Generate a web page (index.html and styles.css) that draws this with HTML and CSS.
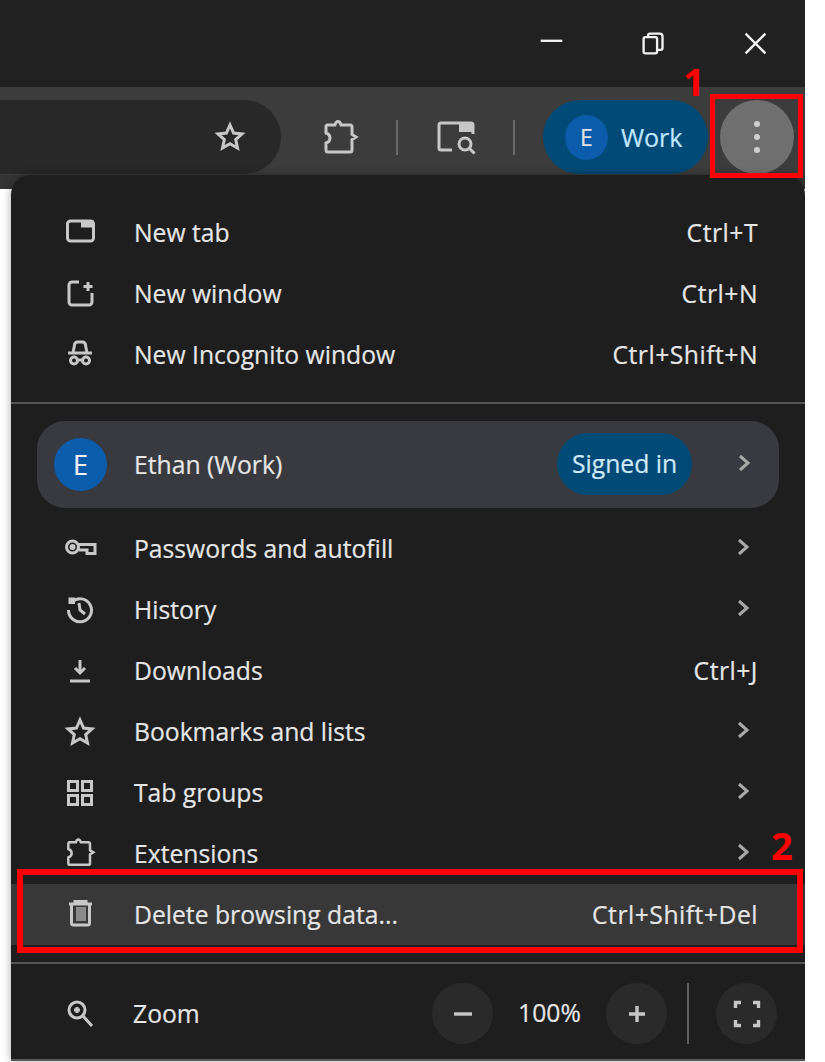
FILE: index.html
```html
<!DOCTYPE html>
<html lang="en">
<head>
<meta charset="utf-8">
<title>Chrome menu</title>
<link rel="stylesheet" href="styles.css">
</head>
<body>
<div class="shell">
  <header class="titlebar">
    <svg class="win" viewBox="0 0 30 30"><path d="M3 12h24"/></svg>
    <svg class="win" viewBox="0 0 30 30"><rect x="4" y="8" width="15" height="18" rx="2"/><path d="M9 7V6a2 2 0 0 1 2-2h11a3 3 0 0 1 3 3v13a2 2 0 0 1-2 2h-3"/></svg>
    <svg class="win" viewBox="0 0 30 30"><path d="M4 4l22 22M26 4L4 26"/></svg>
  </header>
  <div class="toolbar">
    <div class="omnibox">
      <svg class="ico" viewBox="0 0 30 30"><path d="M15 3l3.600 8 8.400.9-6.300 5.700 1.800 8.400-7.500-4.300L7.500 26l1.800-8.400L3 11.900l8.400-.9z"/></svg>
    </div>
    <svg class="tool-ext" viewBox="0 0 36 36"><path d="M5 6h8c.5-2 1.500-3.500 3-3.500s2.500 1.500 3 3.500h9a2 2 0 0 1 2 2v7.500l4 2.500-4 2.500V31a2 2 0 0 1-2 2H6a2 2 0 0 1-2-2v-7c3-1 4-3 4-5s-1-4-4-5V7z"/></svg>
    <span class="tool-sep"></span>
    <svg class="tool-panel" viewBox="0 0 38 34"><path d="M15 30H4a2 2 0 0 1-2-2V5a2 2 0 0 1 2-2h30a2 2 0 0 1 2 2v9"/><rect class="solid" x="22" y="3" width="15" height="9"/><circle cx="28" cy="24" r="6"/><path d="M32.500 28.500l5 5"/></svg>
    <span class="tool-sep"></span>
    <div class="work-pill"><span class="work-avatar">E</span><span>Work</span></div>
    <div class="kebab"><i></i><i></i><i></i></div>
  </div>
  <main class="stage">
    <nav class="menu">
      <section class="group first">
        <div class="row">
          <svg class="ico" viewBox="0 0 30 30"><rect x="2.500" y="3" width="26" height="20" rx="3"/><rect class="solid" x="16" y="2.500" width="13" height="7"/></svg>
          <span class="label">New tab</span><span class="key">Ctrl+T</span>
        </div>
        <div class="row">
          <svg class="ico" viewBox="0 0 30 30"><path d="M14 3H7a3 3 0 0 0-3 3v17a3 3 0 0 0 3 3h17a3 3 0 0 0 3-3V14"/><path d="M23 3v9M18.500 7.500h9"/></svg>
          <span class="label">New window</span><span class="key">Ctrl+N</span>
        </div>
        <div class="row">
          <svg class="ico" viewBox="0 0 30 30"><path d="M3 13h24M8 13l1.500-8a3 3 0 0 1 3-3h5a3 3 0 0 1 3 3l1.500 8"/><circle cx="9" cy="20.500" r="3.500"/><circle cx="21" cy="20.500" r="3.500"/><path d="M12.500 20h5"/></svg>
          <span class="label">New Incognito window</span><span class="key">Ctrl+Shift+N</span>
        </div>
      </section>
      <hr class="sep sep-a">
      <div class="profile">
        <span class="avatar">E</span>
        <span class="label">Ethan (Work)</span>
        <span class="signed">Signed in</span>
        <svg class="chev" viewBox="0 0 30 30"><path d="M11 8l8 7-8 7"/></svg>
      </div>
      <section class="group">
        <div class="row">
          <svg class="ico" viewBox="0 0 30 30"><circle cx="7.500" cy="13" r="6"/><circle cx="7.500" cy="13" r="1.500"/><path d="M14 10.500h16v9h-8v-3.500h-8"/></svg>
          <span class="label">Passwords and autofill</span>
          <svg class="chev" viewBox="0 0 30 30"><path d="M11 8l8 7-8 7"/></svg>
        </div>
        <div class="row">
          <svg class="ico" viewBox="0 0 30 30"><path d="M7 7a11.500 11.500 0 1 1-3.500 8"/><path class="fillpath" d="M3.500 2.500h6.500v6.500H3.500z"/><path d="M14 8l1 7 5 4"/></svg>
          <span class="label">History</span>
          <svg class="chev" viewBox="0 0 30 30"><path d="M11 8l8 7-8 7"/></svg>
        </div>
        <div class="row">
          <svg class="ico" viewBox="0 0 30 30"><path d="M15 4v13M10 12l5 5 5-5M5 25h20"/></svg>
          <span class="label">Downloads</span><span class="key">Ctrl+J</span>
        </div>
        <div class="row">
          <svg class="ico" viewBox="0 0 30 30"><path d="M15 3l3.600 8 8.400.9-6.300 5.700 1.800 8.400-7.500-4.300L7.500 26l1.800-8.400L3 11.900l8.400-.9z"/></svg>
          <span class="label">Bookmarks and lists</span>
          <svg class="chev" viewBox="0 0 30 30"><path d="M11 8l8 7-8 7"/></svg>
        </div>
        <div class="row">
          <svg class="ico" viewBox="0 0 30 30"><rect x="3.500" y="3.500" width="9" height="9"/><rect x="17.500" y="3.500" width="9" height="9"/><rect x="3.500" y="17.500" width="9" height="9"/><rect x="17.500" y="17.500" width="9" height="9"/></svg>
          <span class="label">Tab groups</span>
          <svg class="chev" viewBox="0 0 30 30"><path d="M11 8l8 7-8 7"/></svg>
        </div>
        <div class="row">
          <svg class="ico ico-ext" viewBox="0 2 36 36"><path d="M5 6h8c.5-2 1.500-3.500 3-3.500s2.500 1.500 3 3.500h9a2 2 0 0 1 2 2v7.500l4 2.500-4 2.500V31a2 2 0 0 1-2 2H6a2 2 0 0 1-2-2v-7c3-1 4-3 4-5s-1-4-4-5V7z"/></svg>
          <span class="label">Extensions</span>
          <svg class="chev" viewBox="0 0 30 30"><path d="M11 8l8 7-8 7"/></svg>
        </div>
        <div class="row active">
          <svg class="ico" viewBox="0 0 30 30"><path d="M4 4h23M10 3V1.500h11V3M6.500 5v18a2 2 0 0 0 2 2h14a2 2 0 0 0 2-2V5"/><rect class="dim" x="11" y="7" width="10" height="14"/></svg>
          <span class="label">Delete browsing data...</span><span class="key">Ctrl+Shift+Del</span>
        </div>
      </section>
      <hr class="sep sep-b">
      <div class="zoom-row">
        <svg class="ico" viewBox="0 0 30 30"><circle cx="12" cy="11" r="8"/><path d="M18 17l9 10M12 8v6M9 11h6"/></svg>
        <span class="label zoom-label">Zoom</span>
        <button class="round" type="button"><svg viewBox="0 0 30 30"><path d="M6 15h18"/></svg></button>
        <span class="pct">100%</span>
        <button class="round" type="button"><svg viewBox="0 0 30 30"><path d="M7 15h16M15 7v16"/></svg></button>
        <span class="zoom-div"></span>
        <button class="round" type="button"><svg viewBox="0 0 30 30"><path d="M3.500 9V3.500H9M21 3.500h5.500V9M26.500 21v5.500H21M9 26.500H3.500V21"/></svg></button>
      </div>
    </nav>
  </main>
  <span class="note box-one"></span>
  <span class="note box-two"></span>
  <span class="num num-one">1</span>
  <span class="num num-two">2</span>
</div>
</body>
</html>
```

FILE: styles.css
```css
* { box-sizing: border-box; }
html, body { margin: 0; height: 100%; background: #fff; overflow: hidden; }
body { font-family: "Open Sans", "Noto Sans", sans-serif; color: #e6e6e6; -webkit-text-stroke: .2px currentColor; }
.shell { position: relative; width: 805px; height: 1062px; display: flex; flex-direction: column; overflow: hidden; }
svg { fill: none; stroke: #c7c7c7; stroke-width: 3; flex: none; overflow: visible; filter: blur(.4px); }
svg .solid { fill: #c7c7c7; stroke: none; }
svg .dim { fill: #8a8a8a; stroke: none; }
svg .fillpath { fill: #c7c7c7; stroke: none; }

.titlebar { height: 87px; background: #202120; display: flex; justify-content: flex-end; padding: 30px 36px 0 0; gap: 75px; flex: none; align-items: flex-start; }
.win { width: 27px; height: 27px; stroke: #f2f2f2; stroke-width: 2.6; }

.toolbar { height: 88px; background: #3c3c3c; display: flex; align-items: center; flex: none; padding: 12px 0 0; }
.omnibox { width: 281px; height: 74px; background: #282828; border-radius: 0 37px 37px 0; display: flex; align-items: center; justify-content: flex-end; padding-right: 36px; }
.ico { width: 30px; height: 30px; }
.tool-ext { width: 36px; height: 36px; margin-left: 41px; }
.tool-sep { width: 2px; height: 35px; background: #6a6a6a; margin-left: 38px; }
.tool-panel { width: 38px; height: 34px; margin-left: 39px; }
.tool-panel + .tool-sep { margin-left: 38px; }
.work-pill { width: 165px; height: 74px; margin-left: 28px; background: #004a77; border-radius: 37px; display: flex; align-items: center; padding-left: 22px; gap: 13px; font-size: 25px; color: #c2e7ff; }
.work-avatar { width: 43px; height: 45px; border-radius: 50%; background: #0b5cab; display: flex; align-items: center; justify-content: center; font-size: 23px; color: #e3e3e3; }
.kebab { width: 74px; height: 74px; margin-left: 12px; border-radius: 50%; background: #6f6f6f; display: flex; flex-direction: column; align-items: center; justify-content: center; gap: 7px; }
.kebab i { width: 6px; height: 6px; border-radius: 50%; background: #cfcfcf; }

.stage { flex: 1; padding: 0 0 0 11px; min-height: 0; background: linear-gradient(#343434 14px, #fff 14px); }
.menu { height: 886px; background: #1e1e1e; border-radius: 20px 20px 0 0; border-bottom: 2px solid #5a5a5a; box-shadow: 0 0 9px rgba(0, 0, 0, .35); display: flex; flex-direction: column; }

.group.first { padding-top: 27px; }
.row { height: 61px; display: flex; align-items: center; padding: 0 47px 0 54px; font-size: 24.7px; }
.row .ico { margin-right: 39px; }
.row.active { background: #383838; }
.label { flex: 1; white-space: nowrap; }
.key { white-space: nowrap; letter-spacing: .5px; }
.chev { width: 30px; height: 30px; stroke: #a8a8a8; margin: -3px 0 0 0; }

.sep { margin: 0; border: 0; height: 2px; background: #555; flex: none; }
.sep-a { margin-top: 17px; }
.sep-b { margin-top: 17px; }

.profile { margin: 17px 26px 10px; height: 87px; background: #383a3f; border-radius: 28px; display: flex; align-items: center; padding: 0 21px 0 17px; font-size: 24.7px; }
.profile .chev { margin-right: -1px; }
.avatar { width: 53px; height: 53px; border-radius: 50%; background: #0b5cab; display: flex; align-items: center; justify-content: center; margin-right: 27px; font-size: 27px; color: #f0f0f0; }
.signed { height: 62px; width: 135px; border-radius: 31px; background: #004a77; display: flex; align-items: center; justify-content: center; color: #d3e9f7; margin: -2px 37px 0 0; }

.zoom-row { height: 61px; margin-top: 19px; display: flex; align-items: center; padding: 0 28px 0 54px; font-size: 24.7px; }
.zoom-row .ico { margin-right: 38px; }
.round { width: 61px; height: 61px; border-radius: 50%; border: 0; padding: 0; background: #2a2a2a; display: flex; align-items: center; justify-content: center; }
.round svg { width: 30px; height: 30px; stroke: #c7c7c7; stroke-width: 3.4; }
.pct { width: 113px; text-align: center; padding-bottom: 3px; }
.zoom-div { width: 2px; height: 61px; background: #5f5f5f; margin: 0 27px 0 20px; }

.note { position: absolute; border: 5px solid #f00; }
.box-one { left: 710px; top: 94px; width: 93px; height: 84px; }
.box-two { left: 17px; top: 869px; width: 786px; height: 84px; border-width: 6px; }
.num { position: absolute; color: #f00; font: 700 38px/1 "Open Sans", sans-serif; -webkit-text-stroke: 0; }
.num-one { left: 683px; top: 62px; }
.num-two { left: 771px; top: 826px; }
```
